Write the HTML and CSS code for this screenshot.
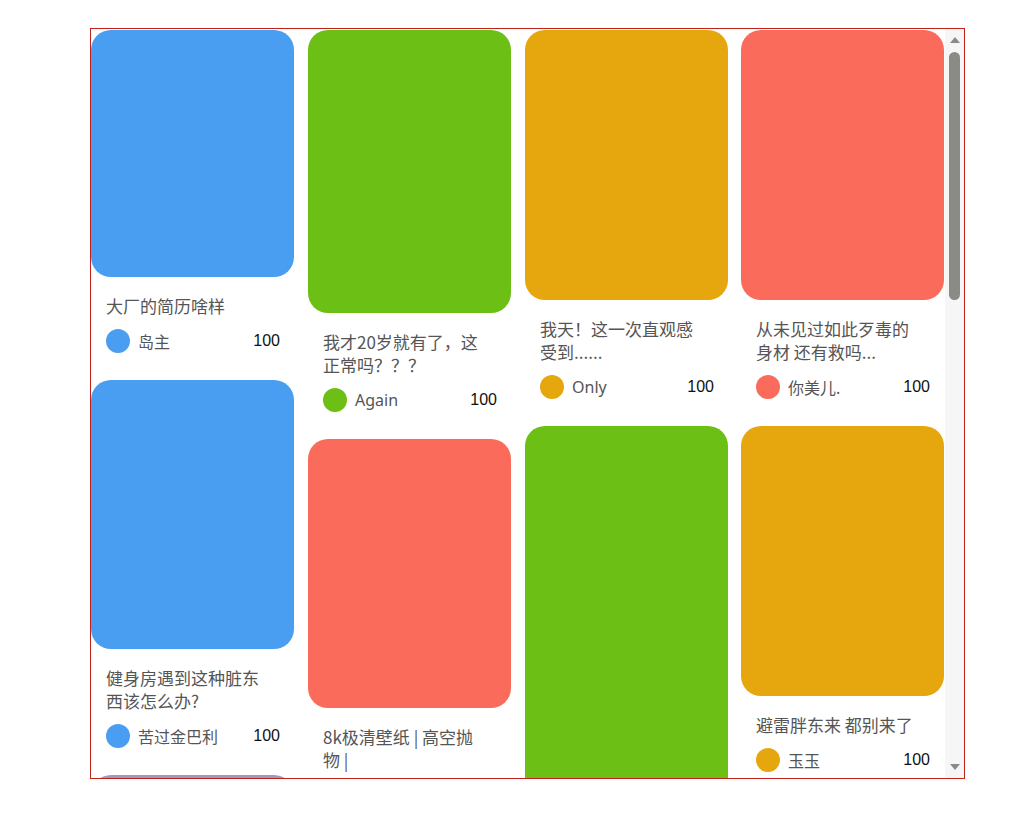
FILE: index.html
```html
<!DOCTYPE html>
<html lang="zh-CN">
<head>
<meta charset="utf-8">
<title>waterfall</title>
<link rel="stylesheet" href="styles.css">
</head>
<body>
<div class="frame">
  <div class="content">
    <div class="col">
      <div class="card">
        <div class="pic blue" style="height:247px"></div>
        <div class="info">
          <div class="title">大厂的简历啥样</div>
          <div class="author"><span class="avatar blue"></span><span class="name">岛主</span><span class="num">100</span></div>
        </div>
      </div>
      <div class="card">
        <div class="pic blue" style="height:269px"></div>
        <div class="info">
          <div class="title">健身房遇到这种脏东西该怎么办?</div>
          <div class="author"><span class="avatar blue"></span><span class="name">苦过金巴利</span><span class="num">100</span></div>
        </div>
      </div>
      <div class="card">
        <div class="pic gray" style="height:270px"></div>
      </div>
    </div>
    <div class="col">
      <div class="card">
        <div class="pic green" style="height:283px"></div>
        <div class="info">
          <div class="title">我才20岁就有了，这正常吗？？？</div>
          <div class="author"><span class="avatar green"></span><span class="name">Again</span><span class="num">100</span></div>
        </div>
      </div>
      <div class="card">
        <div class="pic red" style="height:269px"></div>
        <div class="info">
          <div class="title">8k极清壁纸 | 高空抛物 |</div>
        </div>
      </div>
    </div>
    <div class="col">
      <div class="card">
        <div class="pic orange" style="height:270px"></div>
        <div class="info">
          <div class="title">我天！这一次直观感受到......</div>
          <div class="author"><span class="avatar orange"></span><span class="name">Only</span><span class="num">100</span></div>
        </div>
      </div>
      <div class="card">
        <div class="pic green" style="height:400px"></div>
      </div>
    </div>
    <div class="col last">
      <div class="card">
        <div class="pic red" style="height:270px"></div>
        <div class="info">
          <div class="title">从未见过如此歹毒的身材 还有救吗...</div>
          <div class="author"><span class="avatar red"></span><span class="name">你美儿.</span><span class="num">100</span></div>
        </div>
      </div>
      <div class="card">
        <div class="pic orange" style="height:270px"></div>
        <div class="info">
          <div class="title">避雷胖东来 都别来了</div>
          <div class="author"><span class="avatar orange"></span><span class="name">玉玉</span><span class="num">100</span></div>
        </div>
      </div>
    </div>
  </div>
  <div class="scrollbar">
    <div class="arrow up"></div>
    <div class="thumb"></div>
    <div class="track-rest"></div>
    <div class="arrow down"></div>
  </div>
</div>
</body>
</html>
```
FILE: styles.css
```css
html, body {
  background: #ffffff;
}
body {
  margin: 8px;
  font-family: "Noto Sans", "Noto Sans CJK SC", sans-serif;
}
.frame {
  margin: 20px 0 0 82px;
  width: 873px;
  height: 749px;
  border: 1px solid #c0221a;
  display: flex;
  overflow: hidden;
}
.content {
  flex: 1;
  display: flex;
  gap: 14px;
  padding-top: 1px;
  overflow: hidden;
}
.col {
  width: 203px;
  flex: none;
  display: flex;
  flex-direction: column;
}
.col.last {
  margin-left: -1px;
}
.card {
  margin-bottom: 27px;
}
.pic {
  border-radius: 20px;
}
.blue { background: #4a9ef2; }
.green { background: #6cbf14; }
.orange { background: #e6a60e; }
.red { background: #fb6b5c; }
.gray { background: #9c9cc0; }
.info {
  padding: 17px 14px 0 15px;
}
.title {
  padding-right: 14px;
  font-size: 17px;
  line-height: 23px;
  color: #555555;
  font-family: "Noto Sans CJK SC", sans-serif;
}
.author {
  margin-top: 12px;
  height: 24px;
  display: flex;
  align-items: center;
}
.avatar {
  width: 24px;
  height: 24px;
  border-radius: 50%;
  flex: none;
  margin-right: 8px;
}
.name {
  flex: 1;
  font-size: 16px;
  color: #555555;
  font-family: "Noto Sans", "Noto Sans CJK SC", sans-serif;
}
.num {
  font-size: 16px;
  color: #111111;
  font-family: "Liberation Sans", Arial, sans-serif;
}
.scrollbar {
  width: 19px;
  flex: none;
  background: #f6f6f6;
  display: flex;
  flex-direction: column;
  align-items: center;
}
.arrow {
  width: 0;
  height: 0;
  border-left: 5px solid transparent;
  border-right: 5px solid transparent;
}
.arrow.up {
  margin-top: 8px;
  border-bottom: 6px solid #8a8a8a;
}
.thumb {
  margin-top: 9px;
  width: 11px;
  height: 248px;
  border-radius: 6px;
  background: #8b8b85;
}
.track-rest {
  flex: 1;
}
.arrow.down {
  margin-bottom: 8px;
  border-top: 6px solid #8a8a8a;
}
```
